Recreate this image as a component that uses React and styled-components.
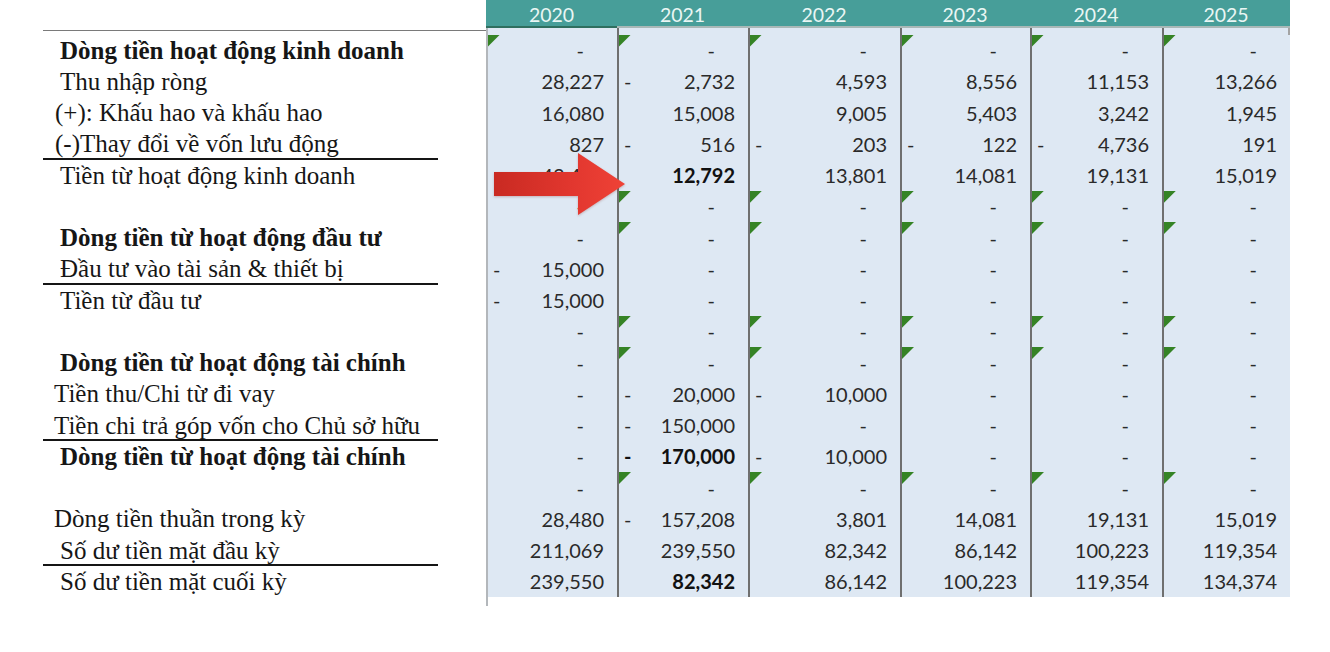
import React from 'react';
import styled, { createGlobalStyle } from 'styled-components';

const Global = createGlobalStyle`
  html, body { margin: 0; padding: 0; background: #ffffff; }
  body { width: 1330px; height: 652px; overflow: hidden; }
`;

const COLS = [131, 131, 152, 130, 132, 128];
const YEARS = ['2020', '2021', '2022', '2023', '2024', '2025'];
const D6 = ['-', '-', '-', '-', '-', '-'];

const ROWS = [
  { label: 'Dòng tiền hoạt động kinh doanh', bold: true, indent: 17, vals: D6, flags: 'all' },
  { label: 'Thu nhập ròng', indent: 17, vals: ['28,227', '-2,732', '4,593', '8,556', '11,153', '13,266'] },
  { label: '(+): Khấu hao và khấu hao', indent: 12, vals: ['16,080', '15,008', '9,005', '5,403', '3,242', '1,945'] },
  { label: '(-)Thay đổi về vốn lưu động', indent: 12, rule: true, vals: ['827', '-516', '-203', '-122', '-4,736', '191'] },
  { label: 'Tiền từ hoạt động kinh doanh', indent: 17, vals: ['43,480', '!12,792', '13,801', '14,081', '19,131', '15,019'] },
  { label: '', vals: D6, flags: 'rest' },
  { label: 'Dòng tiền từ hoạt động đầu tư', bold: true, indent: 17, vals: D6, flags: 'rest' },
  { label: 'Đầu tư vào tài sản & thiết bị', indent: 17, rule: true, vals: ['-15,000', '-', '-', '-', '-', '-'] },
  { label: 'Tiền từ đầu tư', indent: 17, vals: ['-15,000', '-', '-', '-', '-', '-'] },
  { label: '', vals: D6, flags: 'rest' },
  { label: 'Dòng tiền từ hoạt động tài chính', bold: true, indent: 17, vals: D6, flags: 'rest' },
  { label: 'Tiền thu/Chi từ đi vay', indent: 11, vals: ['-', '-20,000', '-10,000', '-', '-', '-'] },
  { label: 'Tiền chi trả góp vốn cho Chủ sở hữu', indent: 11, rule: true, vals: ['-', '-150,000', '-', '-', '-', '-'] },
  { label: 'Dòng tiền từ hoạt động tài chính', bold: true, indent: 17, vals: ['-', '!-170,000', '-10,000', '-', '-', '-'] },
  { label: '', vals: D6, flags: 'rest' },
  { label: 'Dòng tiền thuần trong kỳ', indent: 11, vals: ['28,480', '-157,208', '3,801', '14,081', '19,131', '15,019'] },
  { label: 'Số dư tiền mặt đầu kỳ', indent: 17, rule: true, vals: ['211,069', '239,550', '82,342', '86,142', '100,223', '119,354'] },
  { label: 'Số dư tiền mặt cuối kỳ', indent: 17, vals: ['239,550', '!82,342', '86,142', '100,223', '119,354', '134,374'] },
];

const Page = styled.div`
  position: relative;
  width: 1330px;
  height: 652px;
  box-sizing: border-box;
  padding-left: 43px;
  background: #ffffff;
`;

const Sheet = styled.div`
  display: grid;
  grid-template-columns: 443px ${COLS.map((c) => `${c}px`).join(' ')};
  grid-template-rows: 28px 6.5px repeat(18, 31.25px) 9px;
`;

const Corner = styled.div``;

const YearCell = styled.div`
  display: flex;
  align-items: center;
  justify-content: center;
  background: #479e99;
  color: #eaf6f4;
  font-family: Lato, 'Open Sans', sans-serif;
  font-size: 19.5px;
  box-sizing: border-box;
  padding-top: 3px;
  border-bottom: 2px solid ${(p) => (p.$first ? '#2f6f5f' : '#a9b8b7')};
`;

const RuleCell = styled.div`
  border-top: 1px solid #7a7a7a;
  margin-top: 1.5px;
`;

const Cell = styled.div`
  position: relative;
  display: flex;
  align-items: center;
  justify-content: space-between;
  box-sizing: border-box;
  padding: 0 13px 0 5px;
  background: ${(p) => (p.$blank ? 'transparent' : '#dee8f3')};
  border-left: 2px solid ${(p) => (p.$edge ? '#b3b7bb' : p.$blank ? 'transparent' : '#6f6f6f')};
  border-right: ${(p) => (p.$tick ? '2px solid #a3a3a3' : 'none')};
  font-family: Lato, 'Open Sans', sans-serif;
  font-size: 20px;
  color: #2a2a2a;
  white-space: nowrap;
`;

const Sign = styled.span`
  font-weight: ${(p) => (p.$bold ? 700 : 400)};
  color: ${(p) => (p.$bold ? '#111' : '#2a2a2a')};
`;

const Amount = styled.span`
  margin-left: auto;
  padding-right: ${(p) => (p.$dash ? '20px' : '0')};
  font-weight: ${(p) => (p.$bold ? 700 : 400)};
  color: ${(p) => (p.$bold ? '#111' : '#2a2a2a')};
`;

const Flag = styled.span`
  position: absolute;
  top: 0;
  left: 0;
  width: 12px;
  height: 12px;
  background: #358325;
  clip-path: polygon(0 0, 100% 0, 0 100%);
`;

const LabelCell = styled.div`
  display: flex;
  align-items: stretch;
`;

const Label = styled.div`
  width: 395px;
  box-sizing: border-box;
  padding-left: ${(p) => p.$indent}px;
  font-family: 'Liberation Serif', 'Times New Roman', serif;
  font-size: 25px;
  line-height: 31.25px;
  font-weight: ${(p) => (p.$bold ? 700 : 400)};
  color: #161616;
  white-space: nowrap;
  box-shadow: ${(p) => (p.$rule ? 'inset 0 -2px 0 #151515' : 'none')};
`;

const ArrowWrap = styled.div`
  position: absolute;
  left: 494px;
  top: 153px;
  width: 131px;
  height: 62px;
  filter: drop-shadow(0 1px 1px rgba(120, 20, 10, 0.25));
`;

function Value({ raw, col, flag }) {
  const bold = raw.startsWith('!');
  const s = bold ? raw.slice(1) : raw;
  const dash = s === '-';
  const neg = !dash && s.startsWith('-');
  const num = neg ? s.slice(1) : s;
  return (
    <Cell $edge={col === 0}>
      {flag && <Flag />}
      {neg && <Sign $bold={bold}>-</Sign>}
      <Amount $dash={dash} $bold={bold}>{num}</Amount>
    </Cell>
  );
}

function Arrow() {
  return (
    <ArrowWrap>
      <svg width="131" height="62" viewBox="0 0 131 62">
        <defs>
          <linearGradient id="arrowFill" x1="0" y1="0" x2="1" y2="0">
            <stop offset="0" stopColor="#c92a22" />
            <stop offset="0.6" stopColor="#e2372f" />
            <stop offset="1" stopColor="#ef4236" />
          </linearGradient>
        </defs>
        <polygon points="0,19 84,19 84,0 131,31 84,62 84,43 0,43" fill="url(#arrowFill)" />
      </svg>
    </ArrowWrap>
  );
}

export default function App() {
  return (
    <Page>
      <Global />
      <Sheet>
        <Corner />
        {YEARS.map((y, i) => (
          <YearCell key={y} $first={i === 0}>{y}</YearCell>
        ))}
        <RuleCell />
        {COLS.map((_, i) => (
          <Cell key={`sp${i}`} $edge={i === 0} $tick={i === COLS.length - 1} />
        ))}
        {ROWS.map((r, ri) => (
          <React.Fragment key={ri}>
            <LabelCell>
              <Label $indent={r.indent || 0} $bold={r.bold} $rule={r.rule}>{r.label}</Label>
            </LabelCell>
            {r.vals.map((v, ci) => (
              <Value
                key={ci}
                raw={v}
                col={ci}
                flag={r.flags === 'all' || (r.flags === 'rest' && ci > 0)}
              />
            ))}
          </React.Fragment>
        ))}
        <Corner />
        {COLS.map((_, i) => (
          <Cell key={`tail${i}`} $blank $edge={i === 0} />
        ))}
      </Sheet>
      <Arrow />
    </Page>
  );
}
